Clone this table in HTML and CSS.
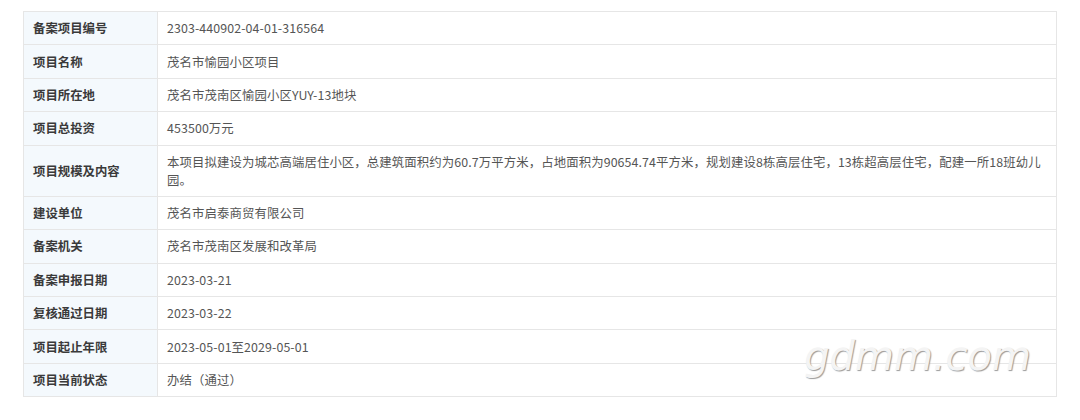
FILE: index.html
```html
<!DOCTYPE html>
<html lang="zh-CN">
  <head>
    <meta charset="UTF-8" />
    <meta name="viewport" content="width=device-width, initial-scale=1.0" />
    <title>项目备案信息</title>
    <link rel="stylesheet" href="styles.css">
  </head>

  <body>
    <div class="page">
      <table class="info">
        <tr>
          <th>备案项目编号</th>
          <td>2303-440902-04-01-316564</td>
        </tr>
        <tr>
          <th>项目名称</th>
          <td>茂名市愉园小区项目</td>
        </tr>
        <tr>
          <th>项目所在地</th>
          <td>茂名市茂南区愉园小区YUY-13地块</td>
        </tr>
        <tr>
          <th>项目总投资</th>
          <td>453500万元</td>
        </tr>
        <tr>
          <th>项目规模及内容</th>
          <td>本项目拟建设为城芯高端居住小区，总建筑面积约为60.7万平方米，占地面积为90654.74平方米，规划建设8栋高层住宅，13栋超高层住宅，配建一所18班幼儿园。</td>
        </tr>
        <tr>
          <th>建设单位</th>
          <td>茂名市启泰商贸有限公司</td>
        </tr>
        <tr>
          <th>备案机关</th>
          <td>茂名市茂南区发展和改革局</td>
        </tr>
        <tr>
          <th>备案申报日期</th>
          <td>2023-03-21</td>
        </tr>
        <tr>
          <th>复核通过日期</th>
          <td>2023-03-22</td>
        </tr>
        <tr>
          <th>项目起止年限</th>
          <td>2023-05-01至2029-05-01</td>
        </tr>
        <tr>
          <th>项目当前状态</th>
          <td>办结（通过）</td>
        </tr>
      </table>

      <div class="watermark">gdmm.com</div>
    </div>
  </body>
</html>
```

FILE: styles.css
```css
body {
  margin: 0;
  background-color: #fff;
  font-family: "Noto Sans CJK SC", "Noto Sans", sans-serif;
}

.page {
  position: relative;
  width: 1034px;
  padding: 11px 0 0 23px;
}

.info {
  width: 1034px;
  border-collapse: collapse;
  border: 1px solid #e3e3e3;
  font-size: 12.4px;
  line-height: 18px;
}

.info th,
.info td {
  border: 1px solid #e6e6e6;
  padding: 7.2px 9px;
  text-align: left;
  vertical-align: middle;
}

.info th {
  width: 115px;
  background-color: #f4f9fd;
  color: #3a3a3a;
  font-weight: bold;
}

.info td {
  color: #555;
  letter-spacing: 0.1px;
}

.watermark {
  position: absolute;
  right: 26px;
  top: 333px;
  font-family: "DejaVu Sans", sans-serif;
  font-size: 40px;
  font-style: italic;
  font-weight: 200;
  color: #f4f4f4;
  text-shadow: 1px 1px 1px #9a9a9a;
}
```
